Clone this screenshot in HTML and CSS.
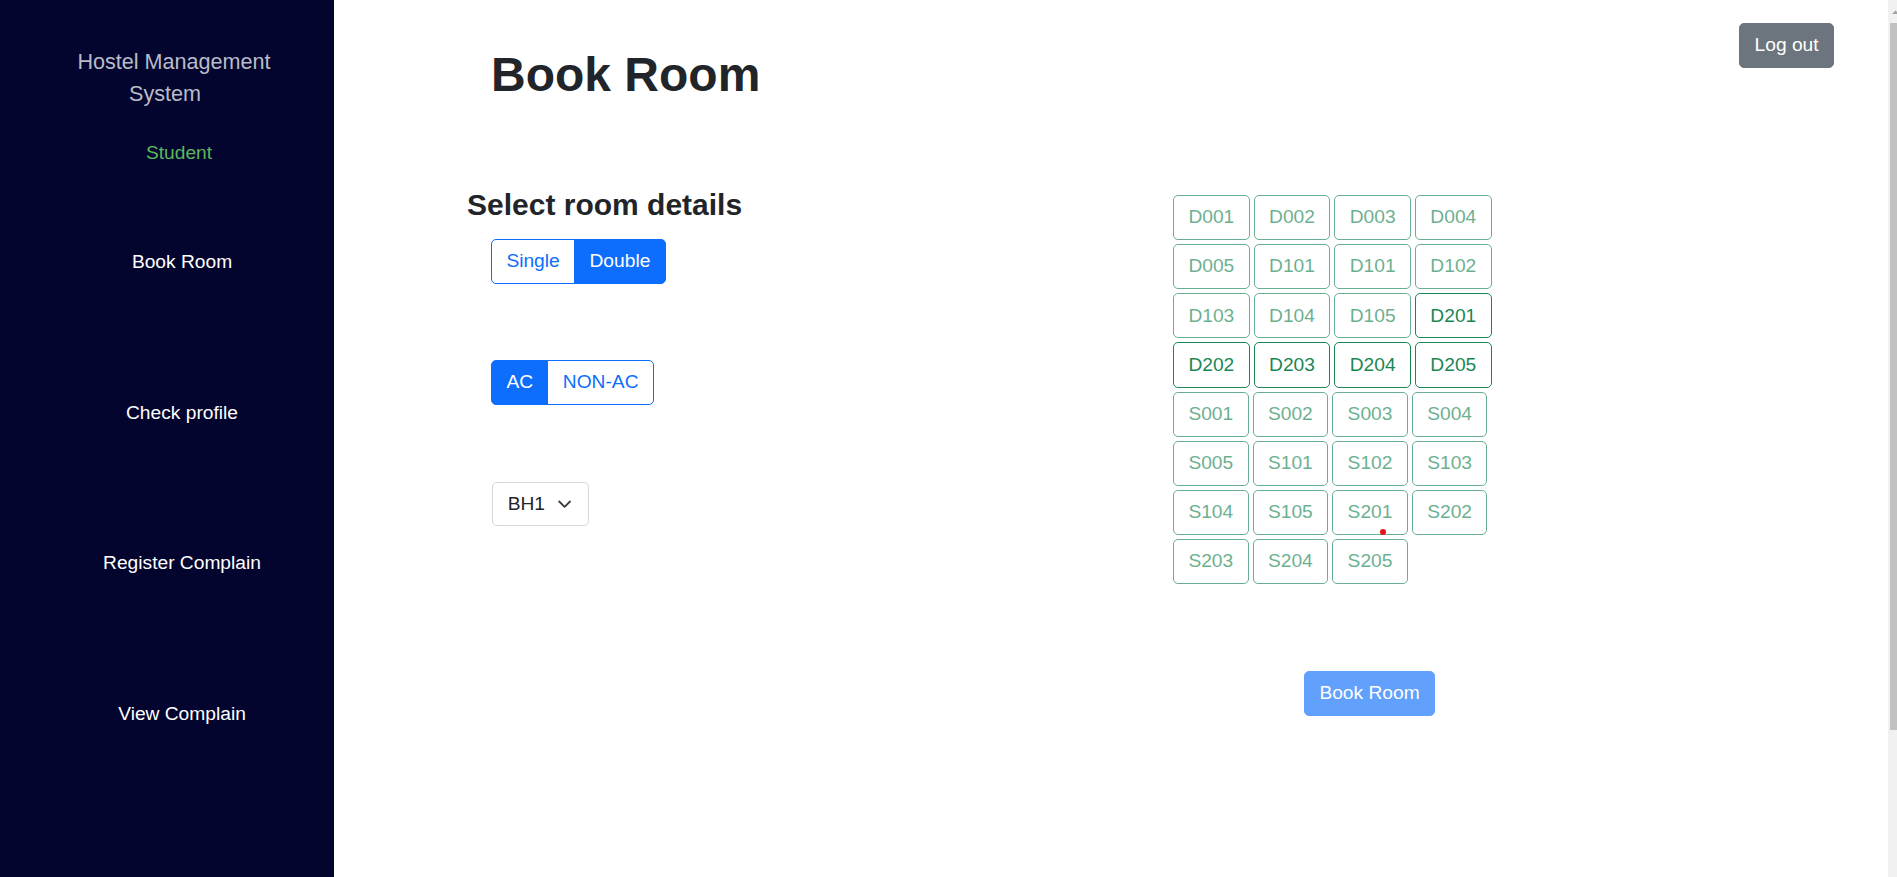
FILE: index.html
```html
<!DOCTYPE html>
<html lang="en">
<head>
<meta charset="utf-8">
<title>Book Room - Hostel Management System</title>
<link rel="stylesheet" href="styles.css">
</head>
<body>
<div class="app">
  <aside class="sidebar">
    <div class="brand">Hostel Management System</div>
    <div class="role">Student</div>
    <nav class="nav">
      <a class="nav-link" href="#">Book Room</a>
      <a class="nav-link" href="#">Check profile</a>
      <a class="nav-link" href="#">Register Complain</a>
      <a class="nav-link" href="#">View Complain</a>
    </nav>
  </aside>
  <main class="main">
    <header class="header">
      <h1 class="page-title">Book Room</h1>
      <button class="btn btn-secondary" type="button">Log out</button>
    </header>
    <section class="content">
      <div class="details">
        <h3 class="details-title">Select room details</h3>
        <div class="btn-group group-type">
          <button class="btn btn-outline-primary" type="button">Single</button>
          <button class="btn btn-primary" type="button">Double</button>
        </div>
        <div class="btn-group group-ac">
          <button class="btn btn-primary" type="button">AC</button>
          <button class="btn btn-outline-primary" type="button">NON-AC</button>
        </div>
        <div class="select">
          <span>BH1</span>
          <svg class="chevron" viewBox="0 0 16 16" width="19" height="14" aria-hidden="true"><path d="M2 5l6 6 6-6" fill="none" stroke="#343a40" stroke-width="2" stroke-linecap="round" stroke-linejoin="round"/></svg>
        </div>
      </div>
      <div class="rooms-col">
        <div class="rooms">
          <button class="btn btn-outline-success" disabled>D001</button>
          <button class="btn btn-outline-success" disabled>D002</button>
          <button class="btn btn-outline-success" disabled>D003</button>
          <button class="btn btn-outline-success" disabled>D004</button>
          <button class="btn btn-outline-success" disabled>D005</button>
          <button class="btn btn-outline-success" disabled>D101</button>
          <button class="btn btn-outline-success" disabled>D101</button>
          <button class="btn btn-outline-success" disabled>D102</button>
          <button class="btn btn-outline-success" disabled>D103</button>
          <button class="btn btn-outline-success" disabled>D104</button>
          <button class="btn btn-outline-success" disabled>D105</button>
          <button class="btn btn-outline-success">D201</button>
          <button class="btn btn-outline-success">D202</button>
          <button class="btn btn-outline-success">D203</button>
          <button class="btn btn-outline-success">D204</button>
          <button class="btn btn-outline-success">D205</button>
          <button class="btn btn-outline-success" disabled>S001</button>
          <button class="btn btn-outline-success" disabled>S002</button>
          <button class="btn btn-outline-success" disabled>S003</button>
          <button class="btn btn-outline-success" disabled>S004</button>
          <button class="btn btn-outline-success" disabled>S005</button>
          <button class="btn btn-outline-success" disabled>S101</button>
          <button class="btn btn-outline-success" disabled>S102</button>
          <button class="btn btn-outline-success" disabled>S103</button>
          <button class="btn btn-outline-success" disabled>S104</button>
          <button class="btn btn-outline-success" disabled>S105</button>
          <button class="btn btn-outline-success" disabled>S201</button>
          <button class="btn btn-outline-success" disabled>S202</button>
          <button class="btn btn-outline-success" disabled>S203</button>
          <button class="btn btn-outline-success" disabled>S204</button>
          <button class="btn btn-outline-success" disabled>S205</button>
          <span class="cursor-dot"></span>
        </div>
        <button class="btn btn-primary btn-book" type="button" disabled>Book Room</button>
      </div>
    </section>
  </main>
</div>
<div class="scrollbar" aria-hidden="true">
  <svg class="scroll-arrow" width="9" height="22" viewBox="0 0 9 22"><polygon points="4,14 7.5,10.5 11,14" fill="#a3a3a3"/></svg>
  <div class="scroll-thumb"></div>
</div>
</body>
</html>
```
FILE: styles.css
```css
* { box-sizing: border-box; }

html, body {
  margin: 0;
  padding: 0;
}

body {
  font-family: "Liberation Sans", Arial, sans-serif;
  font-size: 19.2px;
  line-height: 1.5;
  color: #212529;
  background: #fff;
  overflow: hidden;
}

.app {
  display: flex;
  height: 100vh;
}

/* Decorative page scrollbar (drawn over the right edge) */
.scrollbar {
  position: fixed;
  top: 0;
  right: 0;
  width: 9px;
  height: 100vh;
  background: #f1f1f1;
}
.scroll-arrow {
  display: block;
}
.scroll-thumb {
  margin-top: 0.7px;
  margin-left: 2px;
  width: 7px;
  height: 707px;
  background: #c1c1c1;
}

/* Sidebar */
.sidebar {
  flex: 0 0 334px;
  width: 334px;
  background: #03052e;
  padding-top: 46px;
}

.brand {
  width: 240px;
  margin-left: 45px;
  text-align: center;
  text-indent: 18px;
  font-size: 21.6px;
  line-height: 32.4px;
  color: #b8bcc8;
}

.role {
  margin-top: 28px;
  padding-left: 24px;
  text-align: center;
  color: #5cb85c;
  font-size: 19.2px;
  line-height: 28.8px;
}

.nav {
  margin-top: 80.5px;
  padding-left: 30px;
  display: flex;
  flex-direction: column;
  gap: 121.8px;
}

.nav-link {
  display: block;
  text-align: center;
  color: #fff;
  text-decoration: none;
  font-size: 19.2px;
  line-height: 28.8px;
}

/* Main */
.main {
  flex: 1;
  min-width: 0;
}

.header {
  display: flex;
  justify-content: space-between;
  align-items: flex-start;
  padding: 23px 63px 0 157px;
}

.page-title {
  margin: 23.3px 0 0;
  font-size: 48px;
  line-height: 57.6px;
  font-weight: 700;
  color: #212529;
}

.content {
  display: grid;
  grid-template-columns: 706px 1fr;
  padding-left: 133px;
  margin-top: 82.7px;
}

.details {
  display: flex;
  flex-direction: column;
  align-items: flex-start;
}

.details-title {
  margin: 0;
  font-size: 30px;
  line-height: 36px;
  font-weight: 700;
  color: #212529;
}

/* Buttons */
.btn {
  display: inline-block;
  font-family: inherit;
  font-size: 19.2px;
  line-height: 28.8px;
  padding: 7.2px 14.4px;
  border: 1px solid transparent;
  border-radius: 5px;
  background: transparent;
  text-align: center;
  white-space: nowrap;
  cursor: pointer;
}

.btn:disabled {
  opacity: 0.65;
  cursor: default;
}

.btn-primary {
  color: #fff;
  background: #0d6efd;
  border-color: #0d6efd;
}

.btn-outline-primary {
  color: #0d6efd;
  background: #fff;
  border-color: #0d6efd;
}

.btn-secondary {
  color: #fff;
  background: #6c757d;
  border-color: #6c757d;
}

.btn-outline-success {
  color: #198754;
  background: #fff;
  border-color: #198754;
}

.btn-group {
  display: inline-flex;
}
.btn-group .btn + .btn {
  margin-left: -1px;
}
.btn-group .btn:not(:last-child) {
  border-top-right-radius: 0;
  border-bottom-right-radius: 0;
}
.btn-group .btn:not(:first-child) {
  border-top-left-radius: 0;
  border-bottom-left-radius: 0;
}

.group-type {
  margin-top: 16.4px;
  margin-left: 24px;
}

.group-ac {
  margin-top: 76px;
  margin-left: 24px;
}

.select {
  display: inline-flex;
  align-items: center;
  margin-top: 77px;
  margin-left: 25.3px;
  height: 44px;
  padding: 0 14.4px;
  border: 1px solid #d3d7dc;
  border-radius: 5px;
  color: #212529;
  font-size: 19.2px;
  line-height: 28.8px;
  background: #fff;
}

.chevron {
  display: block;
  width: 19.2px;
  height: 14.4px;
  margin-left: 9.7px;
}

/* Rooms */
.rooms-col {
  display: flex;
  flex-direction: column;
  align-items: flex-start;
}

.rooms {
  position: relative;
  width: 330px;
  margin-top: 8.4px;
  display: flex;
  flex-wrap: wrap;
  gap: 4px;
}

.cursor-dot {
  position: absolute;
  left: 206.5px;
  top: 333.7px;
  width: 6px;
  height: 6px;
  border-radius: 50%;
  background: #e5141b;
}

.btn-book {
  margin-top: 86.5px;
  margin-left: 131px;
}
```
